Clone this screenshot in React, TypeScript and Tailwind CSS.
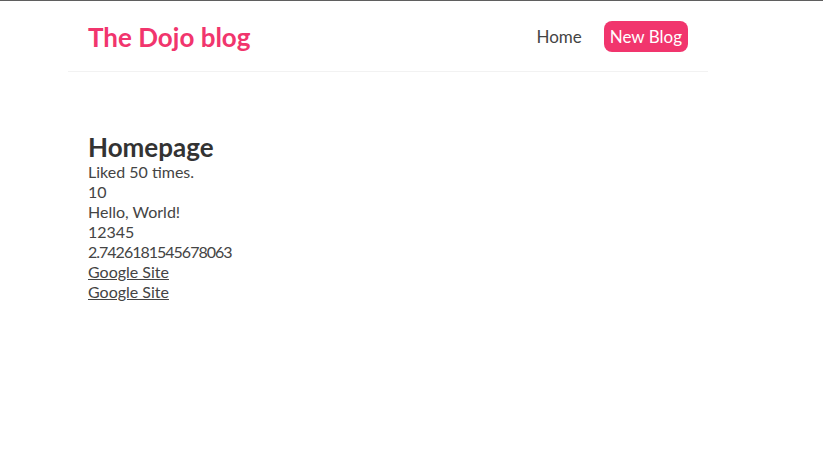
export default function App() {
  const font = { fontFamily: "Lato, 'Noto Sans', sans-serif" };
  return (
    <div className="min-h-[476px] border-t border-[#5f5f5f] bg-white text-[#333]" style={font}>
      <nav className="ml-[68px] flex h-[71px] w-[640px] items-center border-b border-[#f2f2f2] px-5 pt-px">
        <h1 className="text-[26px] font-bold leading-[30px] text-[#f1356d]">The Dojo blog</h1>
        <div className="ml-auto flex items-center">
          <a href="/" className="ml-4 p-1.5 text-[17px] leading-[19px] text-[#444]">Home</a>
          <a href="/create" className="ml-4 rounded-lg bg-[#f1356d] px-1.5 py-[6px] text-[17px] leading-[19px] text-white">New Blog</a>
        </div>
      </nav>
      <div className="ml-[68px] mt-10 w-[640px] p-5">
        <h2 className="text-[26px] font-bold leading-[30px] text-[#333]">Homepage</h2>
        <div className="text-[16px] leading-[20px] text-[#444]">
          <p>Liked 50 times.</p>
          <p>10</p>
          <p>Hello, World!</p>
          <p>12345</p>
          <p className="tracking-[-1px]">2.7426181545678063</p>
          <p><a href="http://www.google.com" className="underline">Google Site</a></p>
          <p><a href="http://www.google.com" className="underline">Google Site</a></p>
        </div>
      </div>
    </div>
  );
}
